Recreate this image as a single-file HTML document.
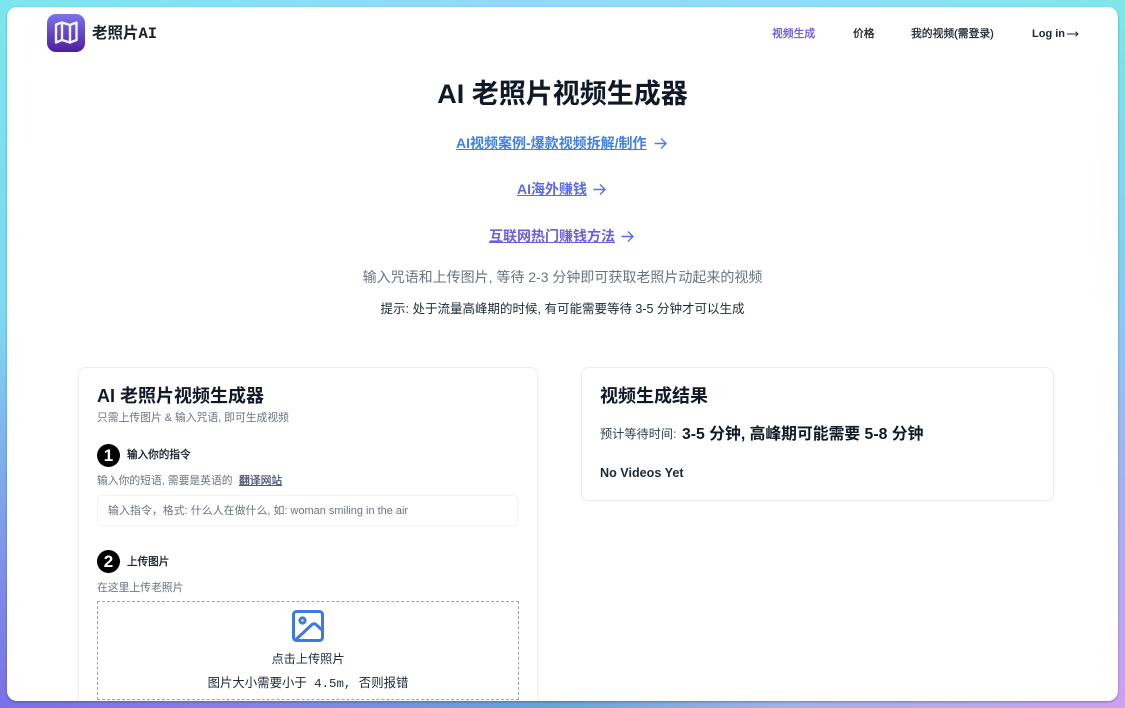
<!DOCTYPE html>
<html lang="zh">
<head>
<meta charset="utf-8">
<title>老照片AI</title>
<style>
*{box-sizing:border-box;margin:0;padding:0}
html,body{width:1125px;height:708px;overflow:hidden}
body{position:relative;font-family:"Liberation Sans","Noto Sans CJK SC",sans-serif;color:#111827;
background:
 linear-gradient(90deg,rgba(122,112,232,1) 0,rgba(122,112,232,.9) 20%,rgba(90,160,216,.95) 48%,rgba(150,170,230,.9) 70%,rgba(205,160,240,1) 100%) 0 694px/1125px 14px no-repeat,
 linear-gradient(90deg,#7ce6ee 0,#93d8fb 45%,#8fdcf8 70%,#7fe6e8 100%) 0 0/1125px 20px no-repeat,
 linear-gradient(180deg,#7ce6ee 0,#7fd8f0 45%,#7f90ea 80%,#7a70e2 100%) 0 0/8px 708px no-repeat,
 linear-gradient(180deg,#7fe6e8 0,#85d0f0 35%,#a8b0ee 70%,#cda0f0 100%) 1117px 0/8px 708px no-repeat;
}
.abs{position:absolute;white-space:nowrap;line-height:1.3}
#win{position:absolute;left:7px;top:7px;width:1111px;height:694px;background:#fff;border-radius:10px;overflow:hidden;box-shadow:0 1px 2px rgba(40,60,90,.45)}
.in{position:absolute;left:-7px;top:-7px;width:1125px;height:708px}
.c{left:0;width:1125px;text-align:center}
.lnk{font-size:14px;font-weight:700;text-decoration:underline}
.card{position:absolute;background:#fff;border:1px solid #eceef1;border-radius:8px;box-shadow:0 1px 2px rgba(0,0,0,.04)}
.num{position:absolute;width:23px;height:23px;border-radius:50%;background:#000;color:#fff;font-weight:700;font-size:17px;line-height:23px;text-align:center}
.gray{color:#6b7280}
.nav{top:27px;font-size:10.8px;line-height:14px;-webkit-text-stroke:.3px currentColor}
.lab{font-size:10.6px;line-height:14px;color:#111827;-webkit-text-stroke:.3px currentColor}
</style>
</head>
<body>
<div id="win"><div class="in">
  <svg class="abs" style="left:47px;top:14px" width="38" height="38" viewBox="0 0 38 38">
    <defs><linearGradient id="g" x1="0" y1="0" x2="0" y2="1"><stop offset="0" stop-color="#7c74ea"/><stop offset="1" stop-color="#4c1d9f"/></linearGradient></defs>
    <rect width="38" height="38" rx="9" fill="url(#g)"/>
    <path d="M9 10.5 L15 8.5 L23 11 L29.5 8.5 V26 L23 28.5 L15 26 L9 28.5 Z M15 8.5 V26 M23 11 V28.5" fill="none" stroke="#fff" stroke-width="2.4" stroke-linejoin="round" opacity=".93"/>
  </svg>
  <div class="abs" style="left:92px;top:24px;font-size:15.5px;font-weight:700;font-family:'Liberation Mono','Noto Sans CJK SC',monospace;color:#1b1f27;line-height:20px">老照片AI</div>

  <div class="abs nav" style="left:772px;color:#6d55dc">视频生成</div>
  <div class="abs nav" style="left:853px;color:#1f2430">价格</div>
  <div class="abs nav" style="left:911px;color:#1f2430">我的视频(需登录)</div>
  <div class="abs" style="left:1032px;top:27px;font-size:11px;line-height:14px;font-weight:700;color:#1f2430">Log in</div>
  <svg class="abs" style="left:1067px;top:30px" width="12" height="8" viewBox="0 0 12 8"><path d="M0 4H11M8.5 1.8L11 4 8.5 6.2" fill="none" stroke="#1f2430" stroke-width="1"/></svg>

  <div class="abs c" style="top:76px;font-size:27px;font-weight:700;color:#111827;line-height:36px">AI 老照片视频生成器</div>

  <div class="abs lnk" style="left:456px;top:134px;color:#3f7fe6">AI视频案例-爆款视频拆解/制作</div>
  <svg class="abs" style="left:653px;top:136px" width="15" height="15" viewBox="0 0 15 15"><path d="M1.5 7.5H13M8 2.5l5 5-5 5" fill="none" stroke="#4a7de6" stroke-width="1.4"/></svg>
  <div class="abs lnk" style="left:517px;top:180px;color:#5d6bdc">AI海外赚钱</div>
  <svg class="abs" style="left:592px;top:182px" width="15" height="15" viewBox="0 0 15 15"><path d="M1.5 7.5H13M8 2.5l5 5-5 5" fill="none" stroke="#5472e0" stroke-width="1.4"/></svg>
  <div class="abs lnk" style="left:489px;top:227px;color:#6a5fdc">互联网热门赚钱方法</div>
  <svg class="abs" style="left:620px;top:229px" width="15" height="15" viewBox="0 0 15 15"><path d="M1.5 7.5H13M8 2.5l5 5-5 5" fill="none" stroke="#5b6ade" stroke-width="1.4"/></svg>

  <div class="abs c gray" style="top:268px;font-size:14px;">输入咒语和上传图片, 等待 2-3 分钟即可获取老照片动起来的视频</div>
  <div class="abs c" style="top:301px;font-size:12.5px;color:#1f2937">提示: 处于流量高峰期的时候, 有可能需要等待 3-5 分钟才可以生成</div>

  <div class="card" style="left:78px;top:367px;width:460px;height:360px"></div>
  <div class="abs" style="left:97px;top:384px;font-size:18px;font-weight:700;color:#111827;line-height:24px">AI 老照片视频生成器</div>
  <div class="abs gray" style="left:97px;top:411px;font-size:10.8px">只需上传图片 &amp; 输入咒语, 即可生成视频</div>

  <div class="num" style="left:97px;top:444px">1</div>
  <div class="abs lab" style="left:127px;top:448px">输入你的指令</div>
  <div class="abs gray" style="left:97px;top:474px;font-size:10.8px">输入你的短语, 需要是英语的</div>
  <div class="abs" style="left:239px;top:474px;font-size:10.8px;color:#4b5578;text-decoration:underline;-webkit-text-stroke:.3px currentColor">翻译网站</div>
  <div class="abs" style="left:97px;top:495px;width:421px;height:31px;border:1px solid #f3f4f6;border-radius:4px;box-shadow:0 1px 1px rgba(0,0,0,.02)"></div>
  <div class="abs gray" style="left:108px;top:504px;font-size:10.96px">输入指令，格式: 什么人在做什么, 如: woman smiling in the air</div>

  <div class="num" style="left:97px;top:550px">2</div>
  <div class="abs lab" style="left:127px;top:555px">上传图片</div>
  <div class="abs gray" style="left:97px;top:581px;font-size:10.8px">在这里上传老照片</div>
  <div class="abs" style="left:97px;top:601px;width:422px;height:99px;border:1px dashed #9ca3af"></div>
  <svg class="abs" style="left:291px;top:609px" width="34" height="34" viewBox="0 0 34 34" fill="none" stroke="#3f78e0" stroke-width="3" stroke-linejoin="round" stroke-linecap="round">
    <rect x="2.5" y="2.5" width="29" height="29" rx="3"/>
    <circle cx="11.5" cy="11.5" r="2.6"/>
    <path d="M5 30.5 L21 15.5 Q23 14 25 15.5 L31 21"/>
  </svg>
  <div class="abs" style="left:97px;width:422px;text-align:center;top:652px;font-size:12.2px;color:#1f2937">点击上传照片</div>
  <div class="abs" style="left:97px;width:422px;text-align:center;top:676px;font-size:12.4px;color:#1f2937;font-family:'Liberation Mono','Noto Sans CJK SC',monospace">图片大小需要小于 4.5m, 否则报错</div>

  <div class="card" style="left:581px;top:367px;width:473px;height:134px"></div>
  <div class="abs" style="left:600px;top:384px;font-size:18px;font-weight:700;color:#111827;line-height:24px">视频生成结果</div>
  <div class="abs" style="left:600px;top:427px;font-size:12.2px;color:#374151">预计等待时间:</div>
  <div class="abs" style="left:682px;top:425px;font-size:15.8px;font-weight:700;color:#111827">3-5 分钟, 高峰期可能需要 5-8 分钟</div>
  <div class="abs" style="left:600px;top:465px;font-size:12.6px;font-weight:700;color:#1f2937">No Videos Yet</div>
</div></div>
</body>
</html>
